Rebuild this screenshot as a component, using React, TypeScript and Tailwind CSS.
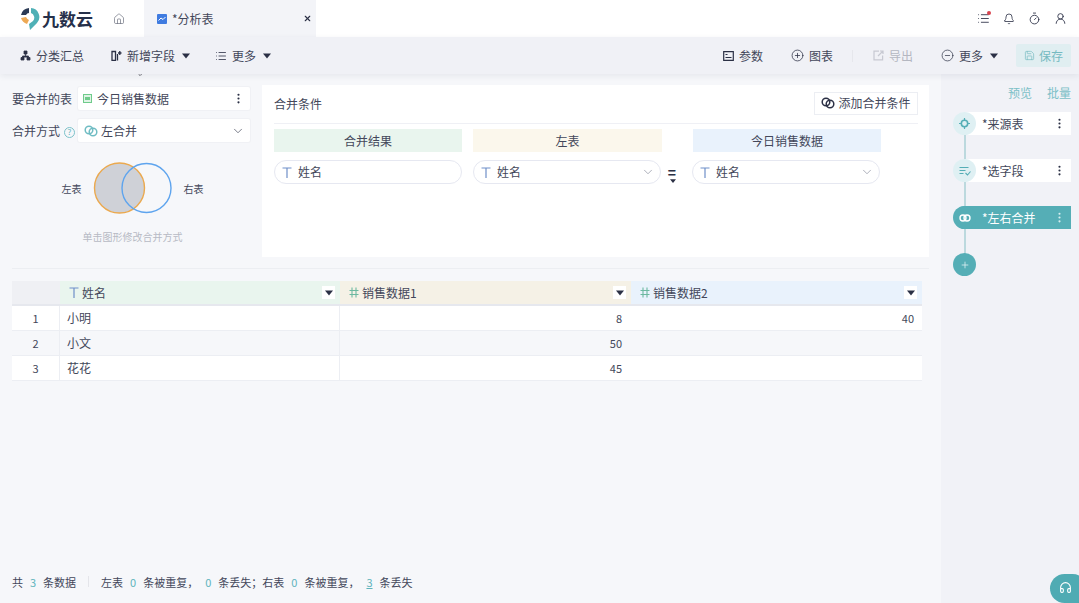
import {
  Bell,
  ChevronDown,
  CirclePlus,
  CircleMinus,
  EllipsisVertical,
  Headphones,
  House,
  List,
  Plus,
  Save,
  Timer,
  UserRound,
  X,
} from "lucide-react";

const font = { fontFamily: '"Noto Sans CJK SC", "Noto Sans", sans-serif' };

function Caret({ className = "" }: { className?: string }) {
  return (
    <svg width="8" height="6" viewBox="0 0 8 6" className={className}>
      <path d="M0 0.5h8L4 5.5z" fill="currentColor" />
    </svg>
  );
}

function TypeT() {
  return (
    <svg width="10" height="11" viewBox="0 0 10 11" className="shrink-0 text-[#6f8fc9]">
      <path d="M0.5 1h9M5 1v10" stroke="currentColor" strokeWidth="1.2" fill="none" />
    </svg>
  );
}

function TypeHash() {
  return (
    <svg width="10" height="11" viewBox="0 0 10 11" className="shrink-0 text-[#6cb8a0]">
      <path d="M3 0.5v10M7 0.5v10M0.5 3.5h9M0.5 7.5h9" stroke="currentColor" strokeWidth="1.1" fill="none" />
    </svg>
  );
}

function Logo() {
  return (
    <svg width="20" height="24" viewBox="0 0 20 24">
      <path d="M9 1A9 9 0 0 0 1 8h5a4 4 0 0 1 3-2z" fill="#2b3a55" />
      <path d="M1 11a9 9 0 0 0 6 6l2-4a5 5 0 0 1-3-3z" fill="#eda955" />
      <path d="M11 1a9 9 0 0 1 6 15l-7 7-1-6 4-3a5 5 0 0 0-2-8z" fill="#4fb0b6" />
    </svg>
  );
}

function MergeIcon({ className = "" }: { className?: string }) {
  return (
    <svg width="14" height="12" viewBox="0 0 14 12" className={className}>
      <circle cx="5" cy="5" r="3.8" fill="none" stroke="currentColor" strokeWidth="1.5" />
      <circle cx="9" cy="7" r="3.8" fill="none" stroke="currentColor" strokeWidth="1.5" />
    </svg>
  );
}

function ToolItem({ icon, label, caret, className = "" }: { icon: React.ReactNode; label: string; caret?: boolean; className?: string }) {
  return (
    <div className={`flex items-center text-[12px] text-[#43475a] ${className}`}>
      {icon}
      <span className="ml-[5px]">{label}</span>
      {caret && <Caret className="ml-[7px] text-[#2b3045]" />}
    </div>
  );
}

function FieldPill({ chevron }: { chevron?: boolean }) {
  return (
    <div className="flex h-[24px] w-[188px] items-center rounded-full border border-[#e6e8f1] bg-white pl-[7px] pr-[5px] text-[12px] text-[#43475a]">
      <TypeT />
      <span className="ml-[6px]">姓名</span>
      {chevron && <ChevronDown size={14} strokeWidth={1.2} className="ml-auto text-[#8b8f9f]" />}
    </div>
  );
}

function ColHead({ label, bg, icon, menu = true, width }: { label: string; bg: string; icon: React.ReactNode; menu?: boolean; width: string }) {
  return (
    <div className={`flex h-[25px] items-center border-b-2 border-[#e6e8ee] pl-[9px] pr-[5px] text-[12px] text-[#43475a] ${bg} ${width}`}>
      {icon}
      <span className="ml-[3px]">{label}</span>
      {menu && (
        <span className="ml-auto flex h-[13px] w-[13px] items-center justify-center bg-white text-[#2b3045]">
          <Caret />
        </span>
      )}
    </div>
  );
}

function Row({ n, name, a, b, alt }: { n: string; name: string; a: string; b?: string; alt?: boolean }) {
  return (
    <div className={`flex h-[25px] items-center border-b border-[#eceef3] text-[12px] text-[#43475a] ${alt ? "bg-[#f6f7fa]" : "bg-white"}`}>
      <div className="flex h-full w-[48px] items-center justify-center border-r border-[#eceef3] text-[11px]">{n}</div>
      <div className="flex h-full w-[280px] items-center border-r border-[#eceef3] pl-[7px]">{name}</div>
      <div className="flex h-full w-[291px] items-center justify-end pr-[9px] text-[11px]">{a}</div>
      <div className="flex h-full w-[291px] items-center justify-end pr-[8px] text-[11px]">{b}</div>
    </div>
  );
}

function StepCard({ icon, label, active }: { icon: React.ReactNode; label: string; active?: boolean }) {
  return (
    <div className={`relative flex h-[23px] w-[117px] items-center rounded-l-full pl-[28px] text-[12px] ${active ? "bg-[#55aeb6] text-white" : "bg-white text-[#43475a]"}`}>
      <span className={`absolute -left-px flex h-[23px] w-[23px] items-center justify-center rounded-full ${active ? "bg-[#55aeb6] text-white" : "bg-[#dff0f3] text-[#55aeb6]"}`}>
        {icon}
      </span>
      {label}
      <EllipsisVertical size={13} strokeWidth={2} className={`absolute right-[5px] ${active ? "text-[#d8eef0]" : "text-[#2b3045]"}`} />
    </div>
  );
}

function Num({ children, line }: { children: string; line?: boolean }) {
  return <span className={`mx-[7px] text-[#5fb4bc] ${line ? "underline" : ""}`}>{children}</span>;
}

export default function App() {
  return (
    <div style={font} className="relative flex h-[603px] w-[1079px] flex-col overflow-hidden bg-[#f6f7fa]">
      {/* top bar */}
      <header className="flex h-[37px] shrink-0 items-center bg-white">
        <div className="ml-[20px] flex w-[89px] items-center">
          <Logo />
          <span className="ml-[2px] text-[17px] font-semibold leading-none text-[#26304a]">九数云</span>
        </div>
        <House size={12} strokeWidth={1.4} className="ml-[4px] text-[#6d7180]" />
        <div className="ml-[19px] flex h-full w-[172px] items-center bg-[#f3f4f8] pl-[13px] pr-[4px]">
          <span className="flex h-[10px] w-[10px] items-center justify-center rounded-[1px] bg-[#3f7be0]">
            <svg width="8" height="6" viewBox="0 0 8 6">
              <path d="M0.5 4.5 3 2l2 1.5L7.5 1" stroke="#fff" strokeWidth="1" fill="none" />
            </svg>
          </span>
          <span className="ml-[5px] text-[12px] text-[#43475a]">*分析表</span>
          <X size={9} strokeWidth={3} className="ml-auto text-[#2b3045]" />
        </div>
        <div className="ml-auto mr-[12px] flex items-center gap-[13px] text-[#2b3045]">
          <span className="relative">
            <List size={13} strokeWidth={1.6} />
            <span className="absolute -right-px -top-px h-[4px] w-[4px] rounded-full bg-[#d9434e]" />
          </span>
          <Bell size={12} strokeWidth={1.6} />
          <Timer size={13} strokeWidth={1.6} />
          <UserRound size={13} strokeWidth={1.6} />
        </div>
      </header>

      {/* toolbar */}
      <div className="z-10 flex h-[37px] shrink-0 items-center bg-[#f0f1f6] shadow-[0_2px_6px_rgba(40,50,80,0.08)]">
        <ToolItem
          className="ml-[20px] w-[91px]"
          label="分类汇总"
          icon={
            <svg width="11" height="11" viewBox="0 0 11 11" className="text-[#2b3045]">
              <path d="M4 1h3v3H4zM1 7.5h3V10H1zM7 7.5h3V10H7zM5.5 4v2M2.5 7.5V6h6v1.5" fill="currentColor" stroke="currentColor" strokeWidth="0.8" />
            </svg>
          }
        />
        <ToolItem
          className="w-[104px]"
          label="新增字段"
          caret
          icon={
            <svg width="11" height="11" viewBox="0 0 11 11" className="text-[#2b3045]">
              <path d="M1 1.5h3.5v9H1zM6.5 4v6.5M8.8 1v4M7 3h3.5" fill="none" stroke="currentColor" strokeWidth="1.3" />
            </svg>
          }
        />
        <ToolItem className="" label="更多" caret icon={<List size={12} strokeWidth={1.6} className="text-[#2b3045]" />} />
        <div className="ml-auto flex items-center">
          <ToolItem
            className="w-[68px]"
            label="参数"
            icon={
              <svg width="11" height="10" viewBox="0 0 11 10" className="text-[#2b3045]">
                <path d="M0.7 0.7h9.6v8.6H0.7zM2.5 3.5h2M2.5 6.5h6" fill="none" stroke="currentColor" strokeWidth="1.2" />
              </svg>
            }
          />
          <ToolItem className="w-[61px]" label="图表" icon={<CirclePlus size={13} strokeWidth={1.4} className="text-[#2b3045]" />} />
          <span className="mr-[20px] h-[12px] w-px bg-[#e6e7ec]" />
          <ToolItem
            className="w-[68px] !text-[#b4b7c1]"
            label="导出"
            icon={
              <svg width="11" height="11" viewBox="0 0 11 11" className="text-[#c7c9d2]">
                <path d="M6 1.2H1v8.6h8.6V5.5M5 6l5-5M7 1h3v3" fill="none" stroke="currentColor" strokeWidth="1.2" />
              </svg>
            }
          />
          <ToolItem className="w-[75px]" label="更多" caret icon={<CircleMinus size={13} strokeWidth={1.3} className="text-[#2b3045]" />} />
          <div className="mr-[8px] flex h-[23px] w-[55px] items-center justify-center gap-[4px] rounded-[2px] bg-[#e0eef1] text-[12px] text-[#75bac1]">
            <Save size={11} strokeWidth={1.5} />
            保存
          </div>
        </div>
      </div>

      <div className="flex min-h-0 flex-1">
        {/* main area */}
        <main className="flex w-[941px] shrink-0 flex-col pl-[12px] pr-[12px]">
          <div className="mt-[11px] flex h-[172px]">
            <div className="w-[238px] shrink-0 pt-[2px] text-[12px] text-[#43475a]">
              <div className="flex items-center">
                <span className="w-[66px]">要合并的表</span>
                <div className="flex h-[23px] w-[172px] items-center rounded-[2px] bg-white pl-[5px] pr-[5px] shadow-[0_0_0_1px_#f0f1f5]">
                  <span className="flex h-[9px] w-[9px] items-center justify-center border border-[#6fcb8b] bg-[#dff3e5]">
                    <span className="h-[3px] w-[5px] bg-[#6fcb8b]" />
                  </span>
                  <span className="ml-[5px]">今日销售数据</span>
                  <EllipsisVertical size={13} strokeWidth={2} className="ml-auto text-[#2b3045]" />
                </div>
              </div>
              <div className="mt-[9px] flex items-center">
                <span className="w-[66px]">
                  合并方式
                  <span className="ml-[4px] inline-flex h-[11px] w-[11px] items-center justify-center rounded-full border border-[#7cc2c9] align-middle text-[8px] leading-none text-[#5fb4bc]">?</span>
                </span>
                <div className="flex h-[23px] w-[172px] items-center rounded-[2px] bg-white pl-[6px] pr-[5px] shadow-[0_0_0_1px_#f0f1f5]">
                  <MergeIcon className="text-[#6fbcc3]" />
                  <span className="ml-[3px]">左合并</span>
                  <ChevronDown size={14} strokeWidth={1.2} className="ml-auto text-[#43475a]" />
                </div>
              </div>
              <div className="mt-[20px] flex items-center justify-center pl-[3px] text-[10px] text-[#43475a]">
                <span className="mr-[11px]">左表</span>
                <svg width="80" height="52" viewBox="0 0 80 52">
                  <circle cx="26.5" cy="26" r="25" fill="#cfd1d7" stroke="#eba94f" strokeWidth="1.4" />
                  <circle cx="53.5" cy="26" r="24.5" fill="none" stroke="#5ea4ee" strokeWidth="1.4" />
                </svg>
                <span className="ml-[11px]">右表</span>
              </div>
              <div className="mt-[15px] pl-[3px] text-center text-[10px] text-[#b7bac4]">单击图形修改合并方式</div>
            </div>

            <section className="ml-[12px] w-[667px] bg-white pl-[12px] pr-[11px]">
              <div className="flex h-[39px] items-center border-b border-[#eff0f5] text-[12px] text-[#43475a]">
                合并条件
                <div className="ml-auto mb-[2px] flex h-[23px] w-[104px] items-center justify-center gap-[3px] border border-[#eceef3] bg-white">
                  <MergeIcon className="text-[#2b3045]" />
                  添加合并条件
                </div>
              </div>
              <div className="mt-[5px] flex text-[12px] text-[#43475a]">
                <div className="flex h-[23px] w-[188px] items-center justify-center bg-[#e9f5ee]">合并结果</div>
                <div className="ml-[11px] flex h-[23px] w-[189px] items-center justify-center bg-[#fbf7ec]">左表</div>
                <div className="ml-[31px] flex h-[23px] w-[188px] items-center justify-center bg-[#e9f2fc]">今日销售数据</div>
              </div>
              <div className="mt-[8px] flex items-center">
                <FieldPill />
                <div className="ml-[11px]">
                  <FieldPill chevron />
                </div>
                <div className="relative flex w-[31px] justify-center">
                  <span className="mr-[9px] text-[14px] font-bold leading-none text-[#2b3045]">=</span>
                  <Caret className="absolute left-[8px] top-[13px] scale-75 text-[#2b3045]" />
                </div>
                <FieldPill chevron />
              </div>
            </section>
          </div>

          {/* splitter */}
          <div className="mt-[11px] h-px w-[917px] bg-[#eceef2]" />

          {/* table */}
          <div className="mt-[12px] w-[910px]">
            <div className="flex">
              <div className="h-[25px] w-[48px] border-b-2 border-[#e6e8ee] bg-[#eff0f4]" />
              <ColHead label="姓名" bg="bg-[#e9f5ee]" icon={<TypeT />} width="w-[280px]" />
              <ColHead label="销售数据1" bg="bg-[#f5f1e6]" icon={<TypeHash />} width="w-[291px]" />
              <ColHead label="销售数据2" bg="bg-[#e9f2fc]" icon={<TypeHash />} width="w-[291px]" />
            </div>
            <Row n="1" name="小明" a="8" b="40" />
            <Row n="2" name="小文" a="50" alt />
            <Row n="3" name="花花" a="45" />
          </div>

          {/* footer counts */}
          <div className="mt-auto mb-[13px] flex items-center text-[11px] text-[#43475a]">
            共<Num>3</Num>条数据
            <span className="mx-[12px] h-[11px] w-px bg-[#e4e5ea]" />
            左表<Num>0</Num>条被重复，<Num>0</Num>条丢失；右表<Num>0</Num>条被重复，<Num line>3</Num>条丢失
          </div>
        </main>

        {/* steps panel */}
        <aside className="flex w-[138px] shrink-0 flex-col bg-[#f1f2f7] pl-[13px] pr-[8px]">
          <div className="mt-[10px] flex justify-end gap-[15px] text-[12px] text-[#7cc0c7]">
            <span>预览</span>
            <span>批量</span>
          </div>
          <div className="relative mt-[10px] flex flex-col gap-[24px]">
            <span className="absolute left-[10px] top-[10px] h-[140px] w-[2px] bg-[#bcd9de]" />
            <StepCard
              label="*来源表"
              icon={
                <svg width="11" height="11" viewBox="0 0 11 11">
                  <circle cx="5.5" cy="5.5" r="3.2" fill="none" stroke="currentColor" strokeWidth="1.6" />
                  <path d="M5.5 0v2M5.5 9v2M0 5.5h2M9 5.5h2" stroke="currentColor" strokeWidth="1.2" />
                </svg>
              }
            />
            <StepCard
              label="*选字段"
              icon={
                <svg width="12" height="10" viewBox="0 0 12 10">
                  <path d="M0.5 1.5h9M0.5 4.5h6M0.5 7.5h4M6.5 7l2 2 3-3.5" fill="none" stroke="currentColor" strokeWidth="1.1" />
                </svg>
              }
            />
            <StepCard
              active
              label="*左右合并"
              icon={
                <svg width="12" height="8" viewBox="0 0 12 8">
                  <circle cx="4" cy="4" r="3" fill="none" stroke="currentColor" strokeWidth="1.4" />
                  <circle cx="8" cy="4" r="3" fill="none" stroke="currentColor" strokeWidth="1.4" />
                </svg>
              }
            />
            <span className="relative -ml-px flex h-[23px] w-[23px] items-center justify-center rounded-full bg-[#55aeb6] text-[#d8eef0]">
              <Plus size={10} strokeWidth={2} />
            </span>
          </div>
        </aside>
      </div>

      {/* chat bubble */}
      <div className="absolute -right-[8px] top-[574px] flex h-[29px] w-[37px] items-start justify-start rounded-t-full rounded-bl-full bg-[#4fabb3] pl-[9px] pt-[7px] text-white">
        <Headphones size={13} strokeWidth={2} />
      </div>

      {/* mouse pointer */}
      <svg width="12" height="15" viewBox="0 0 12 15" className="absolute left-[134px] top-[62px]">
        <path d="M1 1v10.5l2.8-2.3 1.7 4.3 2-0.8-1.7-4.2h3.7z" fill="#fff" stroke="#6e7079" strokeWidth="0.8" />
      </svg>
    </div>
  );
}
